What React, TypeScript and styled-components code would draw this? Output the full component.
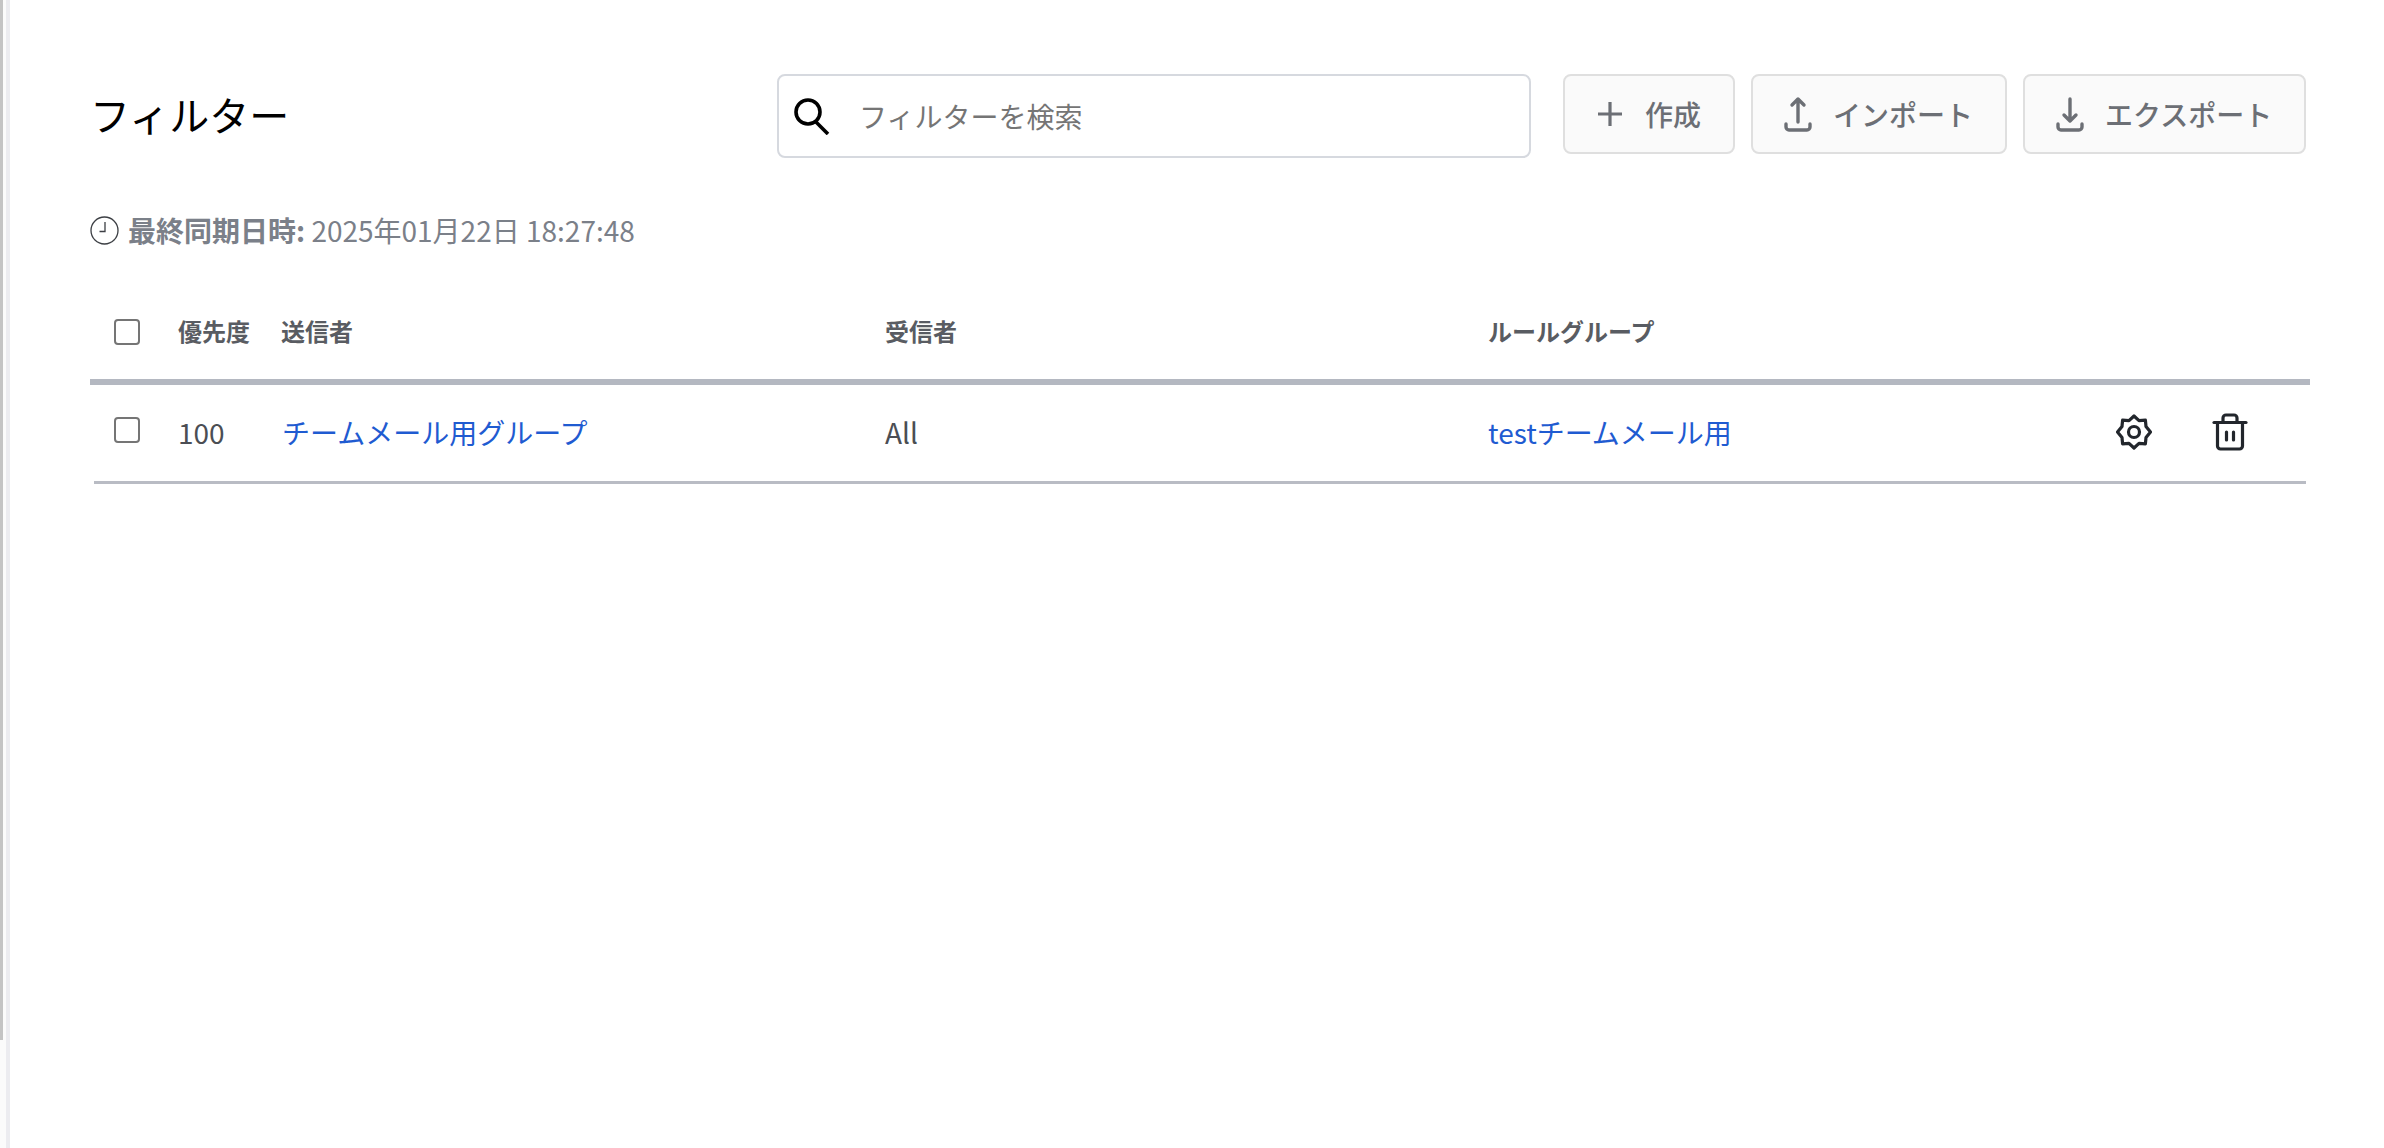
import React from "react";
import styled, { createGlobalStyle } from "styled-components";

const Global = createGlobalStyle`
  html, body { margin: 0; padding: 0; background: #fff; }
  * { box-sizing: border-box; }
  body { font-family: "Noto Sans CJK JP", "Noto Sans", sans-serif; }
`;

const Shell = styled.div`
  display: flex;
  height: 1148px;
  width: 2384px;
  overflow: hidden;
  background: #fff;
`;
const Rail = styled.div`
  width: 10px;
  flex: none;
  background: #fbfbfb;
  border-right: 4px solid #ececf0;
`;
const RailThumb = styled.div`
  width: 3px;
  height: 1040px;
  background: #c4c4c4;
`;
const Main = styled.main`
  flex: 1;
  min-width: 0;
  padding: 74px 78px 0 80px;
`;
const Toolbar = styled.header`
  display: flex;
  align-items: flex-start;
`;
const Title = styled.h1`
  margin: 0;
  width: 687px;
  height: 84px;
  padding-bottom: 5px;
  flex: none;
  display: flex;
  align-items: center;
  font-size: 40px;
  font-weight: 400;
  color: #000;
  line-height: 1;
`;
const Search = styled.label`
  width: 754px;
  height: 84px;
  flex: none;
  display: flex;
  align-items: center;
  gap: 28px;
  padding-left: 14px;
  border: 2px solid #d6d9df;
  border-radius: 8px;
  background: #fff;
`;
const SearchInput = styled.input`
  flex: 1;
  min-width: 0;
  border: 0;
  outline: 0;
  padding: 0;
  background: transparent;
  font: 400 28px "Noto Sans CJK JP", sans-serif;
  &::placeholder { color: #757575; opacity: 1; }
`;
const Actions = styled.div`
  display: flex;
  gap: 16px;
  margin-left: 32px;
`;
const ActionButton = styled.button`
  height: 80px;
  padding: 0 32px 0 31px;
  display: flex;
  align-items: center;
  gap: 21px;
  border: 2px solid #dfdfdf;
  border-radius: 8px;
  background: #fafafa;
  color: #6c6f75;
  font: 500 28px "Noto Sans CJK JP", sans-serif;
  white-space: nowrap;
`;
const Sync = styled.div`
  display: flex;
  align-items: center;
  margin-top: 52px;
  height: 40px;
  font-size: 28px;
  color: #7b8089;
  white-space: pre;
`;
const SyncIcon = styled.svg`
  margin-right: 9px;
  flex: none;
`;
const SyncLabel = styled.b`
  font-weight: 700;
`;
const Table = styled.div`
  margin-top: 31px;
`;
const HeadRow = styled.div`
  display: grid;
  grid-template-columns: 88px 103px 604px 603px 1fr;
  align-items: center;
  height: 104px;
  margin-right: -4px;
  border-bottom: 6px solid #b4b8c1;
  font-size: 24px;
  font-weight: 700;
  color: #595c62;
`;
const BodyRow = styled.div`
  display: grid;
  grid-template-columns: 84px 104px 603px 603px 1fr 96px 96px;
  align-items: center;
  height: 99px;
  margin-left: 4px;
  padding: 0 28px 2px 0;
  border-bottom: 3px solid #b9bcc4;
  font-size: 28px;
  color: #4b4e54;
`;
const CheckCell = styled.div<{ $inset: number; $drop?: number; $lift?: number }>`
  padding-left: ${(p) => p.$inset}px;
  padding-top: ${(p) => p.$drop ?? 0}px;
  padding-bottom: ${(p) => p.$lift ?? 0}px;
  display: flex;
`;
const Check = styled.input`
  appearance: none;
  margin: 0;
  width: 26px;
  height: 26px;
  border: 2px solid #757575;
  border-radius: 4px;
  background: #fff;
`;
const Link = styled.a`
  color: #1f5bd1;
  text-decoration: none;
`;
const IconCell = styled.div`
  display: flex;
  justify-content: center;
`;

const Stroke = { fill: "none", stroke: "currentColor", strokeLinecap: "round" as const, strokeLinejoin: "round" as const };

const SearchIcon = () => (
  <svg width="38" height="38" viewBox="0 0 38 38" {...Stroke} strokeWidth={3.6} color="#000">
    <circle cx="15" cy="15" r="12" />
    <path d="M23 25 L35 37" strokeLinecap="butt" />
  </svg>
);
const PlusIcon = () => (
  <svg width="28" height="28" viewBox="0 0 28 28" {...Stroke} strokeWidth={3.2}>
    <path d="M14 2v24M2 14h24" strokeLinecap="butt" />
  </svg>
);
const UploadIcon = () => (
  <svg width="28" height="36" viewBox="0 0 28 36" {...Stroke} strokeWidth={3.4}>
    <path d="M14 26V3M8 9l6-6 6 6" />
    <path d="M2 28v3a3 3 0 0 0 3 3h18a3 3 0 0 0 3-3v-3" />
  </svg>
);
const DownloadIcon = () => (
  <svg width="28" height="36" viewBox="0 0 28 36" {...Stroke} strokeWidth={3.4}>
    <path d="M14 3v22M8 19l6 6 6-6" />
    <path d="M2 28v3a3 3 0 0 0 3 3h18a3 3 0 0 0 3-3v-3" />
  </svg>
);
const ClockIcon = () => (
  <SyncIcon width="29" height="29" viewBox="0 0 29 29" fill="none" stroke="#3c3f44" strokeWidth="1.3">
    <circle cx="14.5" cy="14.5" r="13.5" />
    <path d="M15 6v9.500H9.500" />
  </SyncIcon>
);
const GearIcon = () => (
  <svg width="36" height="36" viewBox="0 0 36 36" fill="none" stroke="#22262c" strokeWidth="3.2" strokeLinejoin="round">
    <path d="M18 2l5 4.600 6.400-.4.600 6.300L34.500 18 30 23.500l-.6 6.300-6.400-.4L18 34l-5-4.600-6.400.4-.6-6.300L1.500 18 6 12.500l.6-6.300 6.400.4z" />
    <circle cx="18" cy="18" r="5.500" />
  </svg>
);
const TrashIcon = () => (
  <svg width="36" height="38" viewBox="0 0 36 38" fill="none" stroke="#22262c" strokeWidth="3.2" strokeLinecap="round" strokeLinejoin="round">
    <path d="M2 9.500h32" />
    <path d="M11 9V5a3 3 0 0 1 3-3h8a3 3 0 0 1 3 3v4" />
    <path d="M5.500 10v23a3 3 0 0 0 3 3h19a3 3 0 0 0 3-3V10" />
    <path d="M14.500 19v8M21.500 19v8" />
  </svg>
);

export default function App() {
  return (
    <Shell>
      <Global />
      <Rail>
        <RailThumb />
      </Rail>
      <Main>
        <Toolbar>
          <Title>フィルター</Title>
          <Search>
            <SearchIcon />
            <SearchInput placeholder="フィルターを検索" />
          </Search>
          <Actions>
            <ActionButton><PlusIcon />作成</ActionButton>
            <ActionButton><UploadIcon />インポート</ActionButton>
            <ActionButton><DownloadIcon />エクスポート</ActionButton>
          </Actions>
        </Toolbar>
        <Sync>
          <ClockIcon />
          <SyncLabel>最終同期日時:</SyncLabel> 2025年01月22日 18:27:48
        </Sync>
        <Table>
          <HeadRow>
            <CheckCell $inset={24} $drop={3}><Check type="checkbox" /></CheckCell>
            <div>優先度</div>
            <div>送信者</div>
            <div>受信者</div>
            <div>ルールグループ</div>
          </HeadRow>
          <BodyRow>
            <CheckCell $inset={20} $lift={4}><Check type="checkbox" /></CheckCell>
            <div>100</div>
            <div><Link>チームメール用グループ</Link></div>
            <div>All</div>
            <div><Link>testチームメール用</Link></div>
            <IconCell><GearIcon /></IconCell>
            <IconCell><TrashIcon /></IconCell>
          </BodyRow>
        </Table>
      </Main>
    </Shell>
  );
}
